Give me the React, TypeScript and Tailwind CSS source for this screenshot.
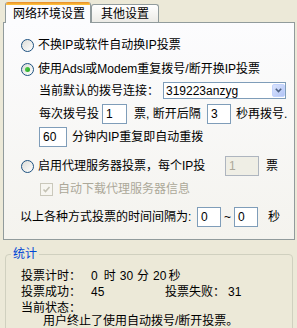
import React from "react";

function Radio({ checked }: { checked?: boolean }) {
  return (
    <div className="w-[13px] h-[13px] shrink-0 rounded-full border border-[#1c5180] bg-gradient-to-br from-[#dcdcd7] to-white flex items-center justify-center">
      {checked && <div className="w-[5px] h-[5px] rounded-full bg-gradient-to-br from-[#55d551] to-[#21a121]" />}
    </div>
  );
}

function Box({ value, w, disabled }: { value: string; w: string; disabled?: boolean }) {
  return (
    <div
      className={
        disabled
          ? `${w} h-[20px] shrink-0 border border-[#aeb5bf] bg-[#efeee5] text-[#aca899] pl-[3px] flex items-center`
          : `${w} h-[20px] shrink-0 border border-[#7f9db9] bg-white pl-[3px] flex items-center`
      }
    >
      {value}
    </div>
  );
}

export default function App() {
  return (
    <div className="w-[297px] h-[328px] overflow-hidden bg-[#ece9d8] text-[12px] leading-[16px] text-black font-['Liberation_Sans','Noto_Sans_CJK_SC',sans-serif]">
      {/* tabs */}
      <div className="relative z-10 flex items-end h-[23px] -mb-px pl-[5px]">
        <div className="w-[86px] h-[21px] bg-[#fcfcfe] border-x border-[#919b9c] rounded-t-[3px] overflow-hidden flex flex-col">
          <div className="h-[3px] bg-gradient-to-b from-[#e68b2c] to-[#ffc73c]" />
          <div className="flex-1 flex items-center pl-[7px]">网络环境设置</div>
        </div>
        <div className="w-[68px] h-[18px] mb-px border-x border-t border-[#919b9c] rounded-t-[3px] bg-gradient-to-b from-white to-[#ecebe6] flex items-center justify-center">
          其他设置
        </div>
      </div>

      {/* panel */}
      <div className="ml-[3px] w-[292px] h-[218px] border border-[#919b9c] bg-gradient-to-b from-[#fcfcfe] to-[#f4f3ee] flex flex-col">
        <div className="mt-[12px] h-[20px] flex items-center pl-[17px] gap-[4px]">
          <Radio />
          <span>不换IP或软件自动换IP投票</span>
        </div>
        <div className="mt-[4px] h-[20px] flex items-center pl-[17px] gap-[4px]">
          <Radio checked />
          <span>使用Adsl或Modem重复拨号/断开换IP投票</span>
        </div>
        <div className="mt-[3px] h-[17px] flex items-center pl-[35px]">
          <span className="w-[124px] shrink-0">当前默认的拨号连接：</span>
          <div className="w-[123px] h-[17px] border border-[#7f9db9] bg-white flex items-center">
            <span className="flex-1 pl-[2px]">319223anzyg</span>
            <div className="w-[13px] h-[13px] rounded-[2px] border border-[#c3d3fd] bg-gradient-to-br from-[#dbe4fd] to-[#b2c4f5] flex items-center justify-center">
              <svg width="7" height="5" viewBox="0 0 7 5">
                <path d="M0.8 0.8 L3.5 3.6 L6.2 0.8" fill="none" stroke="#4d6185" strokeWidth="1.6" />
              </svg>
            </div>
          </div>
        </div>
        <div className="mt-[5px] h-[20px] flex items-center pl-[35px]">
          <span className="w-[63px] shrink-0">每次拨号投</span>
          <Box value="1" w="w-[25px]" />
          <span className="w-[80px] shrink-0 pl-[7px]">票, 断开后隔</span>
          <Box value="3" w="w-[24px]" />
          <span className="pl-[5px]">秒再拨号.</span>
        </div>
        <div className="mt-[3px] h-[20px] flex items-center pl-[35px]">
          <Box value="60" w="w-[28px]" />
          <span className="pl-[5px]">分钟内IP重复即自动重拨</span>
        </div>
        <div className="mt-[9px] h-[20px] flex items-center pl-[17px]">
          <Radio />
          <span className="w-[191px] shrink-0 pl-[4px]">启用代理服务器投票，每个IP投</span>
          <Box value="1" w="w-[34px]" disabled />
          <span className="pl-[7px]">票</span>
        </div>
        <div className="mt-[4px] h-[18px] flex items-center pl-[36px] text-[#aca899]">
          <div className="w-[13px] h-[13px] border border-[#cac8bb] bg-[#f7f6f1] flex items-center justify-center">
            <svg width="9" height="9" viewBox="0 0 9 9">
              <path d="M1.5 4.5 L3.5 6.5 L7.5 2" fill="none" stroke="#c4c2b4" strokeWidth="1.6" />
            </svg>
          </div>
          <span className="pl-[5px]">自动下载代理服务器信息</span>
        </div>
        <div className="mt-[9px] h-[20px] flex items-center pl-[16px]">
          <span className="w-[177px] shrink-0">以上各种方式投票的时间间隔为:</span>
          <Box value="0" w="w-[24px]" />
          <span className="w-[13px] text-center">~</span>
          <Box value="0" w="w-[24px]" />
          <span className="pl-[10px]">秒</span>
        </div>
      </div>

      {/* stats */}
      <div className="mt-[14px] ml-[5px] mr-[4px] h-[90px] border border-[#d0d0bf] rounded-[4px]">
        <div className="-mt-[8px] ml-[5px] px-[2px] w-fit bg-[#ece9d8] text-[#0046d5] leading-[14px]">统计</div>
        <div className="mt-[6px] h-[17px] flex items-center pl-[15px]">
          <span className="w-[70px] shrink-0">投票计时：</span>
          <span>0</span>
          <span className="ml-[6px]">时</span>
          <span className="ml-[4px]">30</span>
          <span className="ml-[4px]">分</span>
          <span className="ml-[4px]">20</span>
          <span className="ml-[2px]">秒</span>
        </div>
        <div className="h-[16px] flex items-center pl-[15px]">
          <span className="w-[70px] shrink-0">投票成功：</span>
          <span className="w-[74px] shrink-0">45</span>
          <span className="w-[63px] shrink-0">投票失败：</span>
          <span>31</span>
        </div>
        <div className="h-[15px] flex items-center pl-[15px]">当前状态：</div>
        <div className="h-[13px] flex items-center pl-[37px] leading-[13px]">用户终止了使用自动拨号/断开投票。</div>
      </div>
    </div>
  );
}
